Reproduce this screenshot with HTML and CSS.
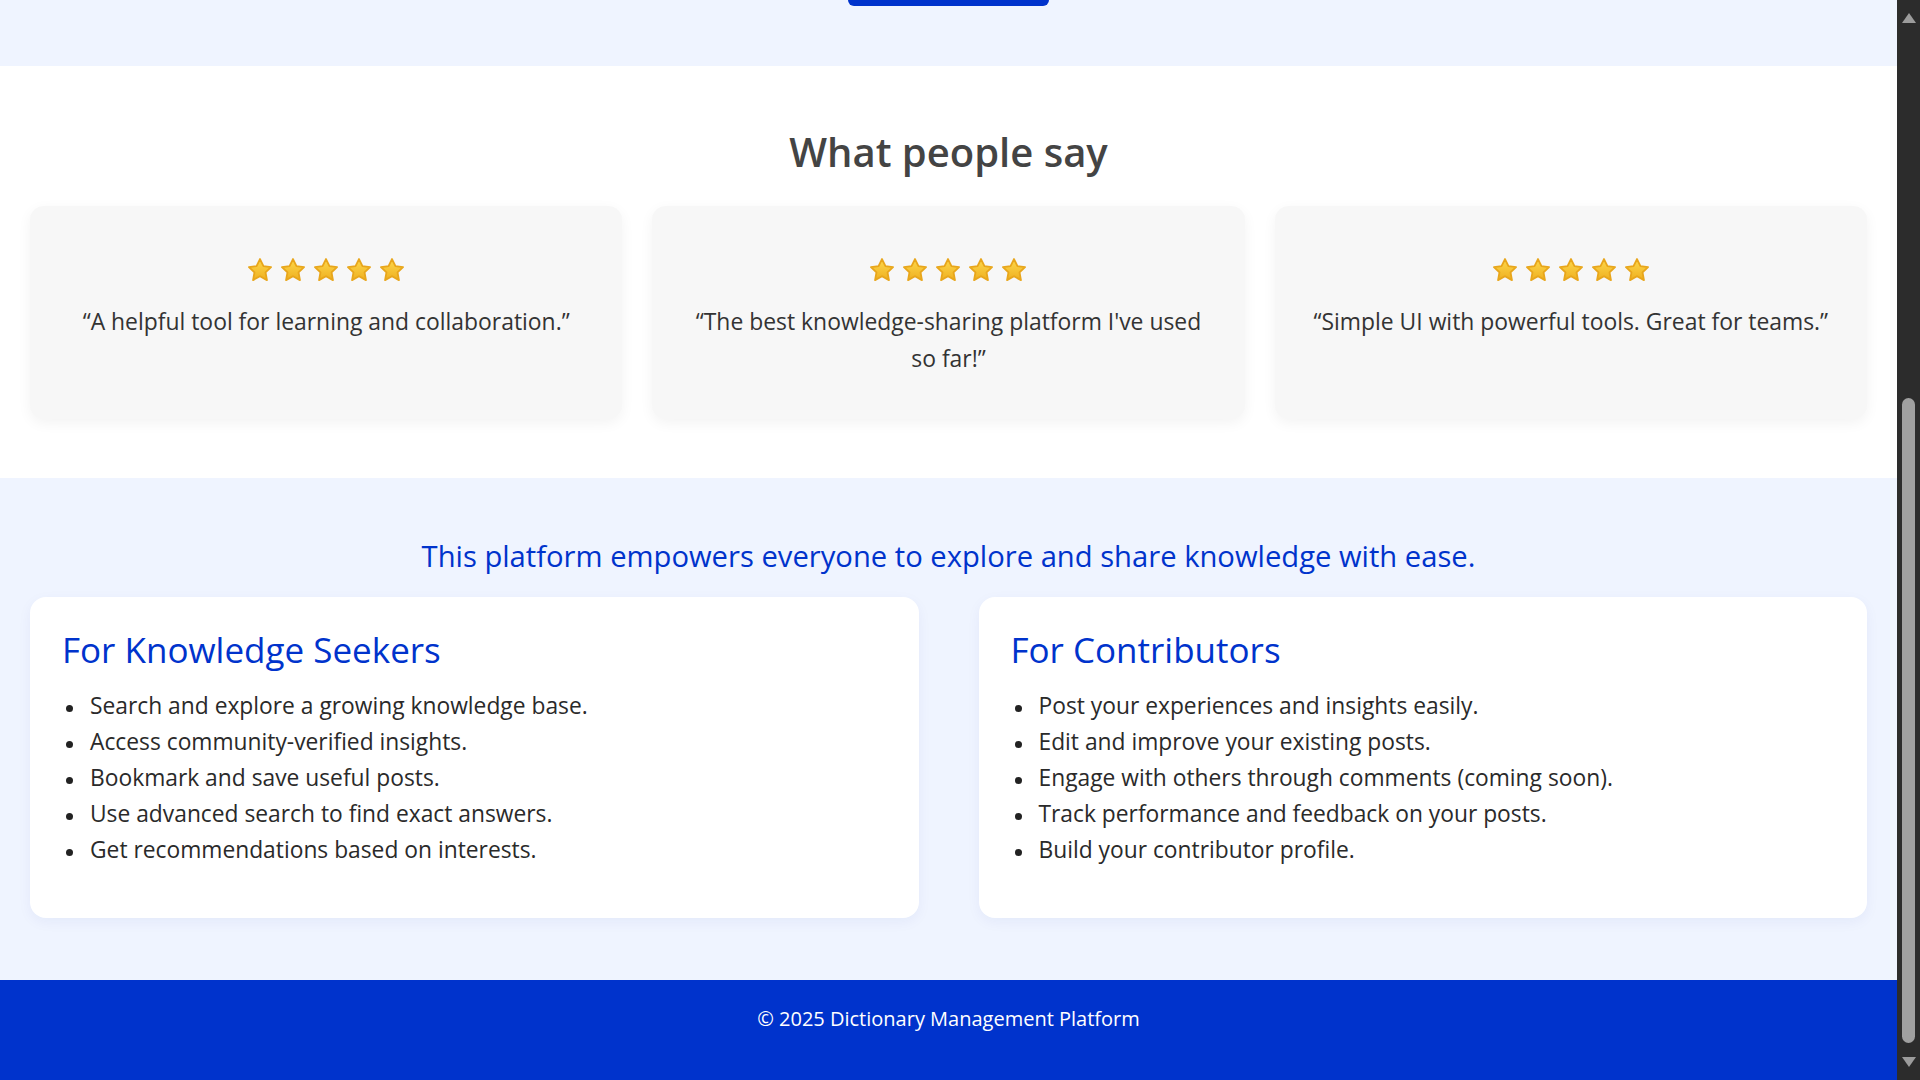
FILE: index.html
```html
<!DOCTYPE html>
<html lang="en">
<head>
<meta charset="utf-8">
<title>Dictionary Management Platform</title>
<link rel="stylesheet" href="styles.css">
</head>
<body>
<svg class="sprite" width="0" height="0" aria-hidden="true">
  <defs>
    <linearGradient id="starFill" x1="0" y1="0" x2="0" y2="1">
      <stop offset="0" stop-color="#fdd84c"/>
      <stop offset="1" stop-color="#efb020"/>
    </linearGradient>
    <symbol id="star" viewBox="0 0 24 24">
      <path d="M12 1.9L15.2 8.4L22.2 9.3L17.1 14.2L18.4 21.3L12 17.8L5.6 21.3L6.9 14.2L1.8 9.3L8.8 8.4Z" fill="url(#starFill)" stroke="#e8a61c" stroke-width="1.7" stroke-linejoin="round"/>
    </symbol>
  </defs>
</svg>
<div class="viewport">
  <main class="page">
    <div class="hero-tail"><span class="hero-btn"></span></div>

    <section class="testimonials">
      <h2 class="section-title">What people say</h2>
      <div class="testimonial-grid">
        <article class="testimonial">
          <div class="stars">
            <svg class="star" viewBox="0 0 24 24"><use href="#star"/></svg>
            <svg class="star" viewBox="0 0 24 24"><use href="#star"/></svg>
            <svg class="star" viewBox="0 0 24 24"><use href="#star"/></svg>
            <svg class="star" viewBox="0 0 24 24"><use href="#star"/></svg>
            <svg class="star" viewBox="0 0 24 24"><use href="#star"/></svg>
          </div>
          <p class="quote">“A helpful tool for learning and collaboration.”</p>
        </article>
        <article class="testimonial">
          <div class="stars">
            <svg class="star" viewBox="0 0 24 24"><use href="#star"/></svg>
            <svg class="star" viewBox="0 0 24 24"><use href="#star"/></svg>
            <svg class="star" viewBox="0 0 24 24"><use href="#star"/></svg>
            <svg class="star" viewBox="0 0 24 24"><use href="#star"/></svg>
            <svg class="star" viewBox="0 0 24 24"><use href="#star"/></svg>
          </div>
          <p class="quote">“The best knowledge-sharing platform I've used so far!”</p>
        </article>
        <article class="testimonial">
          <div class="stars">
            <svg class="star" viewBox="0 0 24 24"><use href="#star"/></svg>
            <svg class="star" viewBox="0 0 24 24"><use href="#star"/></svg>
            <svg class="star" viewBox="0 0 24 24"><use href="#star"/></svg>
            <svg class="star" viewBox="0 0 24 24"><use href="#star"/></svg>
            <svg class="star" viewBox="0 0 24 24"><use href="#star"/></svg>
          </div>
          <p class="quote">“Simple UI with powerful tools. Great for teams.”</p>
        </article>
      </div>
    </section>

    <section class="features">
      <p class="tagline">This platform empowers everyone to explore and share knowledge with ease.</p>
      <div class="feature-grid">
        <div class="feature-card">
          <h3 class="feature-title">For Knowledge Seekers</h3>
          <ul class="feature-list">
            <li>Search and explore a growing knowledge base.</li>
            <li>Access community-verified insights.</li>
            <li>Bookmark and save useful posts.</li>
            <li>Use advanced search to find exact answers.</li>
            <li>Get recommendations based on interests.</li>
          </ul>
        </div>
        <div class="feature-card">
          <h3 class="feature-title">For Contributors</h3>
          <ul class="feature-list">
            <li>Post your experiences and insights easily.</li>
            <li>Edit and improve your existing posts.</li>
            <li>Engage with others through comments (coming soon).</li>
            <li>Track performance and feedback on your posts.</li>
            <li>Build your contributor profile.</li>
          </ul>
        </div>
      </div>
    </section>

    <footer class="footer">
      <p class="footer-text">© 2025 Dictionary Management Platform</p>
    </footer>
  </main>

  <div class="scrollbar" aria-hidden="true">
    <span class="sb-arrow sb-up"></span>
    <span class="sb-thumb"></span>
    <span class="sb-arrow sb-down"></span>
  </div>
</div>
</body>
</html>
```

FILE: styles.css
```css
* {
  box-sizing: border-box;
}

html,
body {
  margin: 0;
  padding: 0;
  height: 1080px;
  overflow: hidden;
}

body {
  font-family: "Open Sans", "Noto Sans", "Liberation Sans", sans-serif;
  color: #333;
  background: #eff4ff;
}

.sprite {
  display: block;
  width: 0;
  height: 0;
  overflow: hidden;
}

.viewport {
  display: flex;
  height: 1080px;
}

.page {
  flex: 1;
  min-width: 0;
  display: flex;
  flex-direction: column;
}

/* tail of the hero section above */
.hero-tail {
  flex: none;
  height: 66px;
  background: #eff4ff;
  display: flex;
  justify-content: center;
  align-items: flex-start;
}

.hero-btn {
  display: block;
  width: 201px;
  height: 6px;
  background: #0033cc;
  border-radius: 0 0 7px 7px;
}

/* testimonials */
.testimonials {
  flex: none;
  background: #ffffff;
  padding: 62px 30px 59px;
}

.section-title {
  margin: 0 0 30px;
  text-align: center;
  font-size: 40px;
  line-height: 48px;
  font-weight: 600;
  color: #444;
}

.testimonial-grid {
  display: grid;
  grid-template-columns: repeat(3, 1fr);
  gap: 30px;
}

.testimonial {
  background: #f7f7f7;
  border-radius: 14px;
  box-shadow: 0 4px 14px rgba(0, 0, 0, 0.05);
  padding: 40px 30px 42px;
  text-align: center;
}

.stars {
  height: 48px;
  display: flex;
  justify-content: center;
  align-items: center;
  gap: 7px;
}

.star {
  width: 26px;
  height: 26px;
  display: block;
}

.quote {
  margin: 10px 0 0;
  font-size: 22.9px;
  line-height: 36.5px;
  color: #333;
}

/* features */
.features {
  flex: 1 0 auto;
  background: #eff4ff;
  padding: 62px 30px 60px;
}

.tagline {
  margin: 0 0 24px;
  text-align: center;
  font-size: 29.2px;
  line-height: 33px;
  font-weight: 500;
  color: #0033cc;
}

.feature-grid {
  display: grid;
  grid-template-columns: repeat(2, 1fr);
  gap: 60px;
}

.feature-card {
  background: #ffffff;
  border-radius: 16px;
  box-shadow: 0 4px 14px rgba(0, 40, 160, 0.05);
  padding: 34px 32px 32px;
}

.feature-title {
  margin: 0;
  font-size: 35px;
  line-height: 38px;
  font-weight: 500;
  color: #0033cc;
}

.feature-list {
  list-style: none;
  margin: 19px 0 18px;
  padding: 0;
}

.feature-list li {
  display: flex;
  font-size: 22.8px;
  line-height: 36px;
  color: #2a2a2a;
}

.feature-list li::before {
  content: "";
  flex: none;
  width: 7px;
  height: 7px;
  border-radius: 50%;
  background: #222;
  margin: 16.5px 17px 0 4px;
}

/* footer */
.footer {
  flex: none;
  background: #0033cc;
  padding: 22px 0 44px;
  text-align: center;
}

.footer-text {
  margin: 0;
  font-size: 20px;
  line-height: 34px;
  color: #ffffff;
}

/* scrollbar */
.scrollbar {
  width: 23px;
  flex: none;
  background: #2c2c2c;
  display: flex;
  flex-direction: column;
  align-items: center;
  padding-top: 13px;
}

.sb-arrow {
  display: block;
  width: 0;
  height: 0;
  border-left: 7.5px solid transparent;
  border-right: 7.5px solid transparent;
}

.sb-up {
  border-bottom: 10px solid #9c9c9c;
}

.sb-thumb {
  display: block;
  width: 13px;
  height: 645px;
  margin-top: 375px;
  border-radius: 7px;
  background: #a0a0a0;
}

.sb-down {
  margin-top: 14px;
  border-top: 10px solid #9c9c9c;
}
```
